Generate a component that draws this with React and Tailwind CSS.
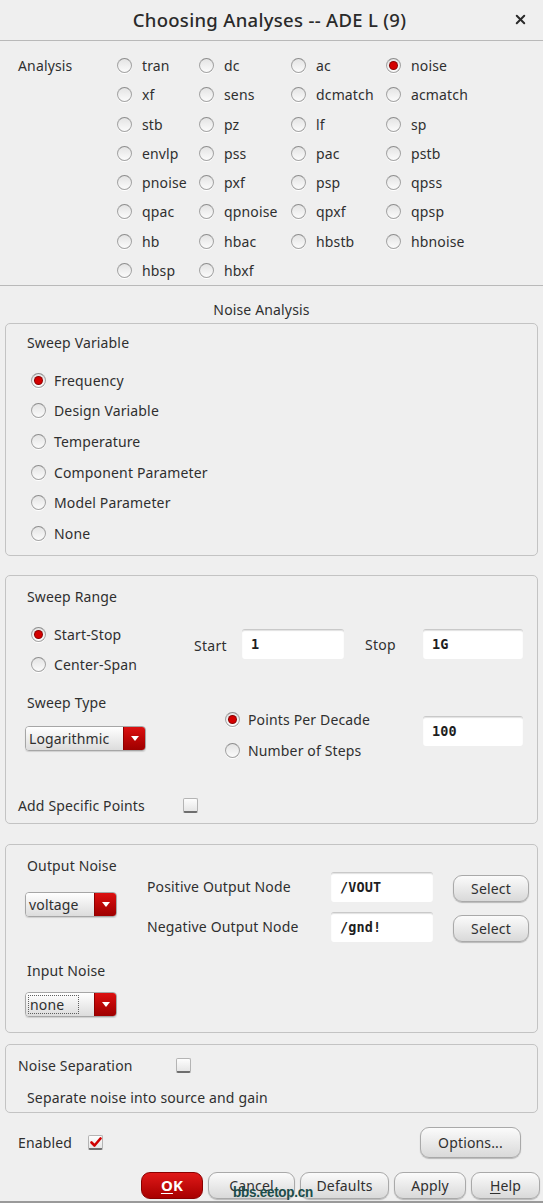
import { X } from 'lucide-react'

const ROWS = [
  ['tran', 'dc', 'ac', 'noise'],
  ['xf', 'sens', 'dcmatch', 'acmatch'],
  ['stb', 'pz', 'lf', 'sp'],
  ['envlp', 'pss', 'pac', 'pstb'],
  ['pnoise', 'pxf', 'psp', 'qpss'],
  ['qpac', 'qpnoise', 'qpxf', 'qpsp'],
  ['hb', 'hbac', 'hbstb', 'hbnoise'],
  ['hbsp', 'hbxf'],
]
const COLS = ['w-[82px]', 'w-[92px]', 'w-[95px]', 'w-[100px]']

function Radio({ on }) {
  return (
    <span className="relative inline-flex w-[15px] h-[15px] shrink-0 items-center justify-center rounded-full border border-[#a4a4a4] border-t-[#8c8c8c] bg-linear-to-b from-[#e4e4e4] to-[#fbfbfb] shadow-[0_1px_0_#ffffff]">
      {on && <span className="w-[7px] h-[7px] rounded-full bg-[#d40000] ring-1 ring-[#8a0000]" />}
    </span>
  )
}

function Check({ on }) {
  return (
    <span className="inline-flex w-[15px] h-[15px] shrink-0 items-center justify-center rounded-[2px] border border-[#b4b4b4] border-b-[#6e6e6e] border-b-2 bg-linear-to-b from-[#fdfdfd] to-[#e6e6e6]">
      {on && (
        <svg width="12" height="11" viewBox="0 0 12 11">
          <path d="M1.5 5.5 L4.5 8.5 L10.5 1.5" fill="none" stroke="#d00000" strokeWidth="2.6" strokeLinecap="round" strokeLinejoin="round" />
        </svg>
      )}
    </span>
  )
}

function Field({ value, w = 'w-[102px]' }) {
  return (
    <div className={`${w} h-[30px] bg-white rounded-[3px] border-t border-[#c9c9c9] shadow-[inset_0_1px_1px_#e2e2e2] flex items-center pl-[9px] text-[13.5px] font-bold text-[#1e1e1e] font-['DejaVu_Sans_Mono',monospace]`}>
      {value}
    </div>
  )
}

function Combo({ value, w, focus }) {
  return (
    <div className={`${w} h-[25px] flex rounded-[4px] border border-[#a6a6a6] overflow-hidden shadow-[0_1px_1px_#cfcfcf]`}>
      <div className="flex-1 flex items-center pl-[2px] bg-linear-to-b from-[#ffffff] to-[#dcdcdc]">
        <span className={focus ? 'px-[1px] pr-[14px] border border-dotted border-[#606060] leading-[17px]' : 'px-[1px]'}>{value}</span>
      </div>
      <div className="w-[22px] flex items-center justify-center bg-linear-to-b from-[#dc1010] to-[#9e0000] border-l border-[#8e0000]">
        <span className="w-0 h-0 border-l-[4px] border-r-[4px] border-t-[5px] border-l-transparent border-r-transparent border-t-white" />
      </div>
    </div>
  )
}

function Btn({ children, className = '' }) {
  return (
    <div className={`flex items-center justify-center rounded-[9px] border border-[#a9a9a9] bg-linear-to-b from-[#fbfbfb] to-[#d9d9d9] shadow-[0_1px_1px_#b8b8b8] text-[14px] text-[#303030] ${className}`}>
      {children}
    </div>
  )
}

export default function App() {
  return (
    <div className="relative w-[543px] h-[1203px] bg-[#efefef] text-[14px] tracking-[0.15px] text-[#2f2f2f] font-['Noto_Sans',sans-serif] overflow-hidden flex flex-col">
      <div className="h-[41px] shrink-0 flex items-center justify-center relative border-b border-[#b9b9b9]">
        <span className="text-[18.5px] font-medium text-[#2a2a2a] tracking-[0.3px] pr-[4px]">Choosing Analyses -- ADE L (9)</span>
        <X size={15} strokeWidth={3.2} className="absolute right-[15px] top-[12px] text-[#2a2a2a]" />
      </div>

      <div className="flex pt-[10px] h-[245px] border-b border-[#b9b9b9] shrink-0">
        <div className="w-[117px] pl-[18px] h-[29.3px] flex items-center">Analysis</div>
        <div className="flex flex-col">
          {ROWS.map((r, i) => (
            <div key={i} className="flex h-[29.3px] items-center">
              {r.map((a, j) => (
                <div key={a} className={`${COLS[j]} flex items-center`}>
                  <Radio on={a === 'noise'} />
                  <span className="ml-[10px]">{a}</span>
                </div>
              ))}
            </div>
          ))}
        </div>
      </div>

      <div className="h-[37px] shrink-0 flex items-center justify-center pt-[10px] pr-[20px]">Noise Analysis</div>

      <div className="mx-[5px] h-[233px] shrink-0 rounded-[5px] border border-[#c3c3c3] pt-[10px]">
        <div className="pl-[21px] h-[18px] leading-[18px]">Sweep Variable</div>
        <div className="mt-[13px] pl-[25px]">
          {['Frequency', 'Design Variable', 'Temperature', 'Component Parameter', 'Model Parameter', 'None'].map((s, i) => (
            <div key={s} className="h-[30.6px] flex items-center">
              <Radio on={i === 0} />
              <span className="ml-[8px]">{s}</span>
            </div>
          ))}
        </div>
      </div>

      <div className="mx-[5px] mt-[19px] h-[249px] shrink-0 rounded-[5px] border border-[#c3c3c3] pt-[12px]">
        <div className="pl-[21px] h-[18px] leading-[18px]">Sweep Range</div>
        <div className="mt-[13px] flex h-[60px]">
          <div className="pl-[25px] w-[188px]">
            {['Start-Stop', 'Center-Span'].map((s, i) => (
              <div key={s} className="h-[30px] flex items-center">
                <Radio on={i === 0} />
                <span className="ml-[8px]">{s}</span>
              </div>
            ))}
          </div>
          <div className="flex items-start pt-[10px]">
            <span className="w-[48px] h-[30px] flex items-center pt-[2px] tracking-[0.3px]">Start</span>
            <Field value="1" />
            <span className="ml-[21px] w-[58px] h-[30px] flex items-center pt-[1px] tracking-[0.3px]">Stop</span>
            <Field value="1G" w="w-[100px]" />
          </div>
        </div>
        <div className="mt-[15px] flex h-[87px]">
          <div className="pl-[19px] w-[219px]">
            <div className="pl-[2px] h-[18px] leading-[18px]">Sweep Type</div>
            <div className="mt-[14px]">
              <Combo value="Logarithmic" w="w-[121px]" />
            </div>
          </div>
          <div className="pt-[9.5px] w-[198px]">
            {['Points Per Decade', 'Number of Steps'].map((s, i) => (
              <div key={s} className="h-[31px] flex items-center">
                <Radio on={i === 0} />
                <span className="ml-[8px]">{s}</span>
              </div>
            ))}
          </div>
          <div className="pt-[22px]">
            <Field value="100" w="w-[100px]" />
          </div>
        </div>
        <div className="mt-[15px] pl-[12px] h-[18px] flex items-center">
          <span className="w-[165px]">Add Specific Points</span>
          <Check />
        </div>
      </div>

      <div className="mx-[5px] mt-[20px] h-[189px] shrink-0 rounded-[5px] border border-[#c3c3c3] pt-[12px] flex">
        <div className="pl-[19px] w-[141px]">
          <div className="pl-[2px] h-[18px] leading-[18px]">Output Noise</div>
          <div className="mt-[17px]">
            <Combo value="voltage" w="w-[92px]" />
          </div>
          <div className="mt-[45px] pl-[2px] h-[18px] leading-[18px]">Input Noise</div>
          <div className="mt-[12px]">
            <Combo value="none" w="w-[92px]" focus />
          </div>
        </div>
        <div className="pt-[15px] flex flex-col gap-[10px]">
          {[['Positive Output Node', '/VOUT'], ['Negative Output Node', '/gnd!']].map(([l, v]) => (
            <div key={l} className="flex items-start h-[30px]">
              <span className="w-[184px] h-[30px] flex items-center pb-[2px]">{l}</span>
              <Field value={v} />
              <Btn className="ml-[20px] mt-[3px] w-[76px] h-[27px]">Select</Btn>
            </div>
          ))}
        </div>
      </div>

      <div className="mx-[5px] mt-[11px] h-[69px] shrink-0 rounded-[5px] border border-[#c3c3c3] pt-[11px]">
        <div className="pl-[12px] h-[18px] flex items-center">
          <span className="w-[158px]">Noise Separation</span>
          <Check />
        </div>
        <div className="mt-[15px] pl-[21px] h-[18px] leading-[18px]">Separate noise into source and gain</div>
      </div>

      <div className="mt-[14px] h-[31px] shrink-0 flex items-center pl-[18px] pr-[22px]">
        <span className="w-[70px]">Enabled</span>
        <Check on />
        <Btn className="ml-auto w-[101px] h-[31px]">Options...</Btn>
      </div>

      <div className="mt-[14px] h-[27px] shrink-0 flex justify-end gap-[5px] pr-[3px]">
        <div className="w-[62px] h-[27px] flex items-center justify-center rounded-[9px] border border-[#8a0000] bg-linear-to-b from-[#e01818] to-[#a80000] text-white font-bold text-[15px]">
          <span><span className="underline underline-offset-2">O</span>K</span>
        </div>
        <Btn className="w-[87px] h-[27px]">Cancel</Btn>
        <Btn className="w-[89px] h-[27px]">Defaults</Btn>
        <Btn className="w-[72px] h-[27px]"><span>Apply</span></Btn>
        <Btn className="w-[69px] h-[27px]"><span><span className="underline underline-offset-2">H</span>elp</span></Btn>
      </div>

      <div className="absolute left-0 right-0 bottom-0 h-[2px] bg-[#9a9a9a]" />
      <div className="absolute left-[233px] top-[1181px] text-[15px] font-bold text-[#1b4d4a] font-['Liberation_Sans_Narrow','Liberation_Sans',sans-serif] tracking-[-0.3px] scale-x-90 origin-left">bbs.eetop.cn</div>
    </div>
  )
}
